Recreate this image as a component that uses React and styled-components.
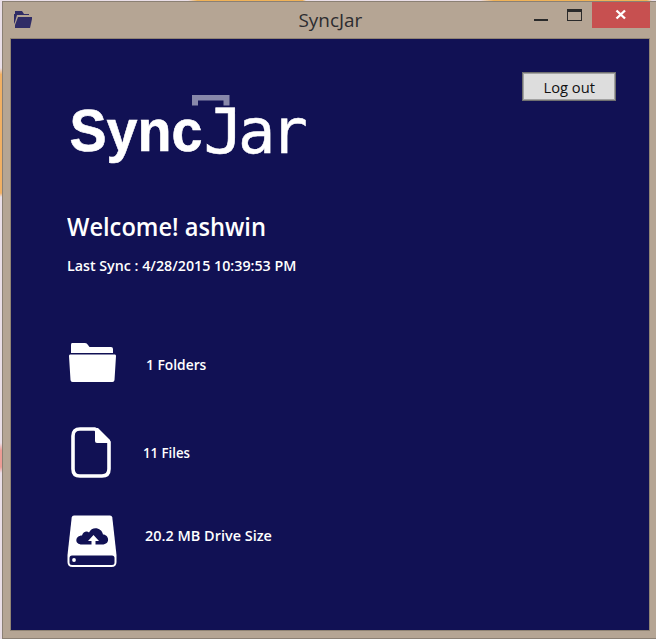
import React from "react";
import styled, { createGlobalStyle } from "styled-components";

const GlobalStyle = createGlobalStyle`
  *, *::before, *::after { box-sizing: border-box; }
  body { margin: 0; overflow: hidden; }
`;

const Desktop = styled.div`
  width: 656px;
  height: 639px;
  padding: 1px 0 0 2px;
  background:
    linear-gradient(to right, transparent, #f0b257 8%, #f0b257 97%, transparent) 188px 0 / 118px 1px no-repeat,
    linear-gradient(to right, transparent, #f0b257 8%, #f0b257 97%, transparent) 480px 0 / 172px 1px no-repeat,
    linear-gradient(transparent, #f2b063 5%, #f2b063 97%, transparent) 0 68px / 2px 129px no-repeat,
    linear-gradient(transparent, #ec9c95 25%, #ec9c95 80%, transparent) 0 443px / 2px 30px no-repeat,
    #eadfe8;
`;

const Window = styled.div`
  width: 654px;
  height: 638px;
  display: flex;
  flex-direction: column;
  background: #b5a594;
  border: 1px solid #8b8074;
  border-right: 0;
  font-family: "Open Sans", "Noto Sans", sans-serif;
`;

const TitleBar = styled.header`
  height: 36px;
  flex: none;
  display: grid;
  grid-template-columns: 139px 1fr 140px;
  padding: 0 6px 0 11px;
`;

const AppIcon = styled.svg`
  width: 18px;
  height: 18px;
  margin-top: 8px;
`;

const Stretch = styled.span`
  display: inline-block;
  white-space: nowrap;
  transform: scaleX(${(p) => p.$x || 1});
  transform-origin: ${(p) => p.$origin || "left"};
`;

const Title = styled.div`
  text-align: center;
  font-size: 18px;
  line-height: 37px;
  color: #2c2c30;
  padding-right: 3px;
`;

const Controls = styled.div`
  display: flex;
  justify-content: flex-end;
  align-items: flex-start;
`;

const ControlIcon = styled.svg`
  width: ${(p) => p.$w}px;
  height: 26px;
  background: ${(p) => p.$bg || "transparent"};
`;

const Client = styled.main`
  width: 640px;
  height: 593px;
  margin-left: 7px;
  flex: none;
  border: 1px solid #8f8374;
  background: #111154;
  padding: 33px 33px 0 56px;
  color: #fff;
`;

const Header = styled.div`
  display: flex;
  justify-content: space-between;
  align-items: flex-start;
  height: 137px;
`;

const Logo = styled.svg`
  width: 244px;
  height: 80px;
  margin-top: 17px;
`;

const LogoutButton = styled.button`
  width: 94px;
  height: 29px;
  padding: 0;
  border: 1px solid #707070;
  box-shadow: inset 0 0 0 1px #a2a2a2;
  background: #dddddd;
  font: 15px/20px "Open Sans", "Noto Sans", sans-serif;
  color: #111;
`;

const Welcome = styled.h1`
  margin: 0;
  font-size: 25px;
  font-weight: 600;
  line-height: 34px;
`;

const LastSync = styled.p`
  margin: 12px 0 0;
  font-size: 15px;
  font-weight: 600;
  line-height: 20px;
`;

const Stats = styled.div`
  display: grid;
  grid-template-rows: 85px 87px 70px;
  margin-top: 65px;
`;

const Stat = styled.div`
  display: flex;
  align-items: flex-start;
`;

const StatIcon = styled.svg`
  width: 52px;
  height: 56px;
  flex: none;
`;

const StatLabel = styled.div`
  font-size: 15px;
  font-weight: 600;
  line-height: 20px;
  margin-top: ${(p) => p.$top}px;
  margin-left: ${(p) => p.$left}px;
`;

export default function App() {
  return (
    <>
      <GlobalStyle />
      <Desktop>
        <Window>
          <TitleBar>
            <AppIcon viewBox="0 0 18 18" fill="#302c66">
              <path d="M1 1h7l2 3h5v1H3L1 12 0 14V4h1z" />
              <path d="M4 7h14v2l-2 9H1V15z" />
            </AppIcon>
            <Title><Stretch $x={1.05} $origin="center">SyncJar</Stretch></Title>
            <Controls>
              <ControlIcon $w={33} viewBox="0 0 33 26"><path d="M9 17h14v2H9z" fill="#2a2a2a" /></ControlIcon>
              <ControlIcon $w={34} viewBox="0 0 34 26">
                <path d="M9 7h15v12H9zM10 10v8h13v-8z" fillRule="evenodd" fill="#2a2a2a" />
              </ControlIcon>
              <ControlIcon $w={58} $bg="#c75050" viewBox="0 0 58 26">
                <path d="M24.5 8.500l8.500 8M33 8.500l-8.500 8" stroke="#fff" strokeWidth="2.400" />
              </ControlIcon>
            </Controls>
          </TitleBar>
          <Client>
            <Header>
              <Logo viewBox="0 0 244 80" fill="#fff">
                <path d="M125 16.500V6h37.500v10.500h-6V11.500H131v5z" fill="#8888aa" />
                <text x="2.500" y="62" fontFamily="Liberation Sans" fontWeight="700" fontSize="60" textLength="133" lengthAdjust="spacingAndGlyphs" stroke="#fff" strokeWidth="0.600">Sync</text>
                <text transform="translate(136.500 64) scale(1.08 1)" fontFamily="DejaVu Sans Mono" fontSize="62" stroke="#fff" strokeWidth="0.500">J</text>
                <text x="171 203.500" y="64" fontFamily="DejaVu Sans Mono" fontSize="62" stroke="#fff" strokeWidth="0.500">ar</text>
              </Logo>
              <LogoutButton><Stretch $x={0.98} $origin="center">Log out</Stretch></LogoutButton>
            </Header>
            <Welcome><Stretch $x={0.947}>Welcome! ashwin</Stretch></Welcome>
            <LastSync><Stretch $x={0.95}>Last Sync : 4/28/2015 10:39:53 PM</Stretch></LastSync>
            <Stats>
              <Stat>
                <StatIcon viewBox="0 0 52 56" fill="#fff">
                  <path d="M5 3h13q2 0 3 2l1.500 2H44q2 0 2 2v4H4V5q0-2 1-2z" />
                  <path d="M3 14.500h45q1 0 1 1.500l-1.500 24q-.2 2-2 2h-40q-1.800 0-2-2L2 16q0-1.500 1-1.500z" />
                </StatIcon>
                <StatLabel $left={27} $top={14}><Stretch $x={0.92}>1 Folders</Stretch></StatLabel>
              </Stat>
              <Stat>
                <StatIcon viewBox="0 0 52 56">
                  <path d="M13 4H28L42 17V44q0 7-7 7H13q-7 0-7-7V11q0-7 7-7z" fill="none" stroke="#fff" strokeWidth="3.600" strokeLinejoin="round" />
                  <path d="M28 3h3l12 12v3H30q-2 0-2-2z" fill="#fff" />
                </StatIcon>
                <StatLabel $left={24} $top={17}><Stretch $x={0.88}>11 Files</Stretch></StatLabel>
              </Stat>
              <Stat>
                <StatIcon viewBox="0 0 52 56">
                  <path d="M7 3.500H43q2 0 2.300 2L49.500 43V50q0 5-5 5H5.500q-5 0-5-5V43L4.700 5.500Q5 3.500 7 3.500z" fill="#fff" />
                  <rect x="2.500" y="43.500" width="45" height="9.500" rx="2.500" fill="#111154" />
                  <circle cx="7" cy="48" r="1.900" fill="#fff" />
                  <path d="M15 32.500c-8 0-7-9 0-9 1-4 5-5 7-3 3-7 13-5 14 2 6 0 8 10-1 10z" fill="#111154" />
                  <path d="M26.500 23l5.500 6h-3.500v5h-4v-5H21z" fill="#fff" />
                </StatIcon>
                <StatLabel $left={26} $top={13}><Stretch $x={0.963}>20.2 MB Drive Size</Stretch></StatLabel>
              </Stat>
            </Stats>
          </Client>
        </Window>
      </Desktop>
    </>
  );
}
